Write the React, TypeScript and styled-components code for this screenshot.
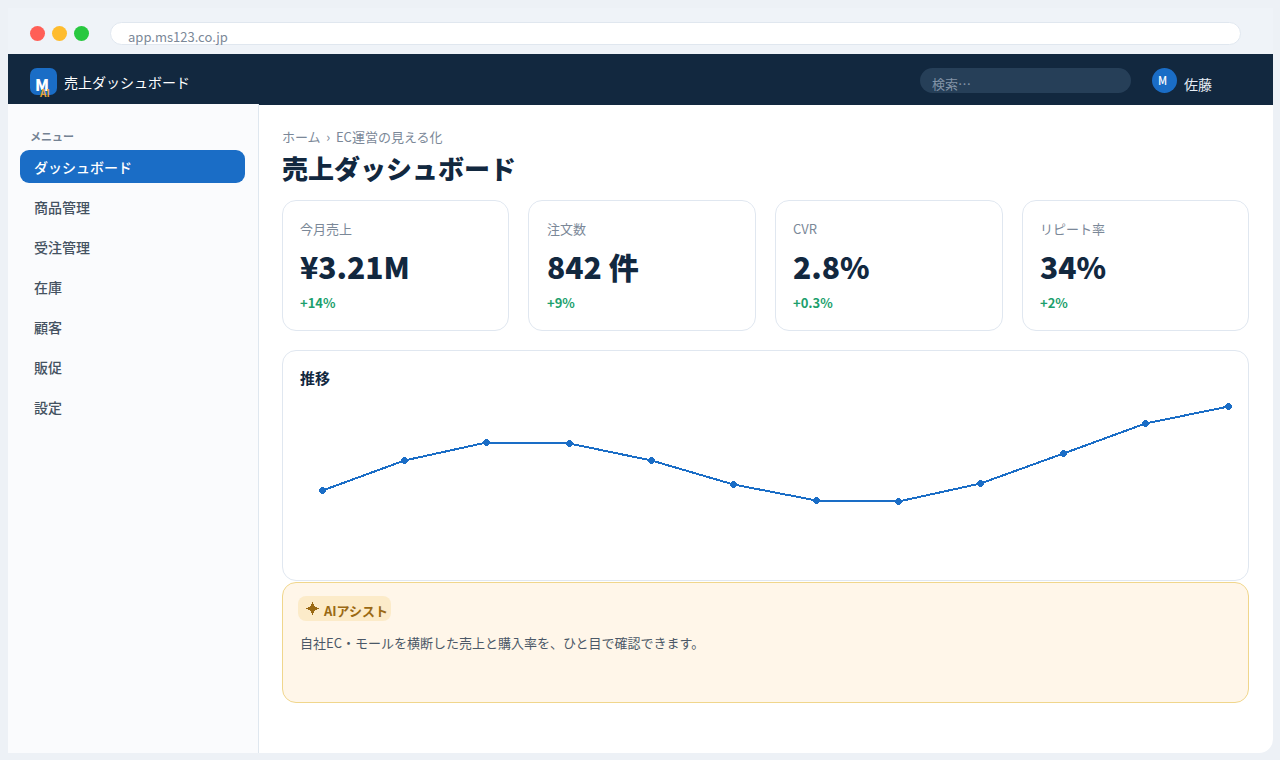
import React from "react";
import styled, { createGlobalStyle } from "styled-components";

const GlobalStyle = createGlobalStyle`
  * { box-sizing: border-box; }
  body {
    margin: 0;
    background: #edf1f6;
    font-family: "Noto Sans CJK JP", "Noto Sans", sans-serif;
    color: #12283f;
  }
`;

const Page = styled.div`
  width: 1280px;
  height: 760px;
  padding: 8px 7px 7px 8px;
  overflow: hidden;
`;

const Window = styled.div`
  height: 745px;
  display: flex;
  flex-direction: column;
  background: #fff;
  border-radius: 0 0 14px 0;
  overflow: hidden;
`;

const Chrome = styled.div`
  height: 46px;
  flex: none;
  display: flex;
  align-items: flex-start;
  padding: 14px 32px 0 22px;
  background: #eff3f8;
`;

const Lights = styled.div`
  display: flex;
  gap: 7px;
  width: 80px;
  padding-top: 4px;
`;

const Light = styled.span<{ $color: string }>`
  width: 15px;
  height: 15px;
  border-radius: 50%;
  background: ${(p) => p.$color};
`;

const Address = styled.div`
  flex: 1;
  height: 23px;
  padding: 4px 0 0 17px;
  border: 1px solid #e0e7ef;
  border-radius: 12px;
  background: #fff;
  color: #7b8898;
  font-size: 13px;
  line-height: 19px;
`;

const Header = styled.header`
  height: 51px;
  flex: none;
  display: flex;
  align-items: flex-start;
  padding: 14px 61px 0 22px;
  background: #12283f;
`;

const Logo = styled.div`
  position: relative;
  width: 27px;
  height: 27px;
  padding: 4px 0 0 5px;
  border-radius: 7px;
  background: #1a6dc6;
  color: #fff;
  font-size: 16px;
  font-weight: 900;
  line-height: 24px;
`;

const LogoTag = styled.span`
  position: absolute;
  left: 10px;
  top: 19px;
  color: #e8a435;
  font-size: 10px;
  font-weight: 700;
  line-height: 12px;
`;

const Brand = styled.div`
  margin: 4px auto 0 7px;
  color: #fff;
  font-size: 14px;
  line-height: 20px;
`;

const Search = styled.div`
  width: 211px;
  height: 25px;
  padding: 6px 0 0 12px;
  border-radius: 13px;
  background: #263f58;
  color: #8394a7;
  font-size: 13px;
  line-height: 20px;
`;

const Avatar = styled.div`
  width: 25px;
  height: 25px;
  margin-left: 21px;
  padding: 2px 0 0 6px;
  border-radius: 50%;
  background: #1a6dc6;
  color: #fff;
  font-size: 11px;
  font-weight: 500;
  line-height: 20px;
`;

const UserName = styled.div`
  width: 28px;
  margin: 6px 0 0 7px;
  color: #e6edf5;
  font-size: 14px;
  line-height: 20px;
`;

const Body = styled.div`
  flex: 1;
  display: flex;
  min-height: 0;
`;

const Sidebar = styled.nav`
  width: 251px;
  margin-top: -1px;
  padding: 22px 13px 0 12px;
  border-right: 1px solid #dfe7ef;
  background: #fafbfd;
`;

const MenuLabel = styled.div`
  height: 24px;
  padding-left: 10px;
  color: #748293;
  font-size: 11px;
  font-weight: 700;
  line-height: 20px;
`;

const MenuItem = styled.div<{ $active?: boolean }>`
  height: 33px;
  margin-bottom: 7px;
  padding: 7px 0 0 14px;
  border-radius: 9px;
  background: ${(p) => (p.$active ? "#1a6dc6" : "transparent")};
  color: ${(p) => (p.$active ? "#fff" : "#445261")};
  font-size: 14px;
  font-weight: 500;
  line-height: 20px;
`;

const Main = styled.main`
  flex: 1;
  padding: 22px 24px 0 23px;
`;

const Breadcrumb = styled.div`
  height: 20px;
  color: #7b8898;
  font-size: 13px;
  line-height: 20px;
  word-spacing: 2.8px;
`;

const Title = styled.h1`
  height: 53px;
  margin: 0;
  padding-top: 2px;
  font-size: 26px;
  font-weight: 900;
  line-height: 38px;
`;

const Metrics = styled.section`
  display: grid;
  grid-template-columns: 227px 228px 228px 227px;
  column-gap: 19px;
  margin-bottom: 19px;
`;

const Panel = styled.section`
  border: 1px solid #e0e7f0;
  border-radius: 14px;
  background: #fff;
`;

const Metric = styled(Panel)`
  height: 131px;
  padding: 18px 17px 0;

  &:nth-child(2) {
    padding-left: 18px;
  }
`;

const MetricLabel = styled.div`
  color: #7b8898;
  font-size: 13px;
  line-height: 20px;
`;

const MetricValue = styled.div`
  height: 54px;
  padding-top: 4px;
  font-size: 30px;
  font-weight: 900;
  line-height: 46px;
`;

const MetricDelta = styled.div`
  color: #1d9f6d;
  font-size: 13px;
  font-weight: 700;
  line-height: 20px;
`;

const ChartPanel = styled(Panel)`
  height: 231px;
  margin-bottom: 1px;
  padding-top: 16px;
`;

const ChartTitle = styled.h2`
  height: 24px;
  margin: 0;
  padding-left: 17px;
  font-size: 15px;
  font-weight: 700;
  line-height: 22px;
`;

const ChartSvg = styled.svg`
  display: block;
`;

const Assist = styled(Panel)`
  height: 121px;
  padding: 13px 15px 0;
  border-color: #f0d68c;
  background: #fff6e9;
`;

const AssistBadge = styled.div`
  display: flex;
  width: 93px;
  height: 25px;
  padding: 5px 0 0 8px;
  border-radius: 8px;
  background: #fcebc9;
  color: #9a6913;
  font-size: 13px;
  font-weight: 700;
  line-height: 20px;
  white-space: nowrap;
`;

const Spark = styled.svg`
  flex: none;
  margin: 1px 5px 0 0;
`;

const AssistText = styled.p`
  margin: 12px 0 0 2px;
  color: #4b5867;
  font-size: 13px;
  line-height: 20px;
`;

const menu = ["ダッシュボード", "商品管理", "受注管理", "在庫", "顧客", "販促", "設定"];

const metrics = [
  { label: "今月売上", value: "¥3.21M", delta: "+14%" },
  { label: "注文数", value: "842 件", delta: "+9%" },
  { label: "CVR", value: "2.8%", delta: "+0.3%" },
  { label: "リピート率", value: "34%", delta: "+2%" },
];

const points: [number, number][] = [
  [39, 99], [121, 69], [203, 51], [286, 52], [368, 69], [450, 93],
  [533, 109], [615, 110], [697, 92], [780, 62], [862, 32], [945, 15],
];

function TrendChart() {
  return (
    <ChartSvg width="965" height="180" viewBox="0 0 965 180" shapeRendering="crispEdges">
      <polyline
        points={points.map(([x, y]) => `${x + 0.5},${y + 0.5}`).join(" ")}
        fill="none"
        stroke="#1a6dc6"
        strokeWidth="2"
      />
      {points.map(([x, y]) => (
        <circle key={x} cx={x + 0.5} cy={y + 0.5} r="3.4" fill="#1a6dc6" />
      ))}
    </ChartSvg>
  );
}

export default function App() {
  return (
    <Page>
      <GlobalStyle />
      <Window>
        <Chrome>
          <Lights>
            <Light $color="#ff5f57" />
            <Light $color="#febc2e" />
            <Light $color="#28c840" />
          </Lights>
          <Address>app.ms123.co.jp</Address>
        </Chrome>
        <Header>
          <Logo>
            M<LogoTag>AI</LogoTag>
          </Logo>
          <Brand>売上ダッシュボード</Brand>
          <Search>検索…</Search>
          <Avatar>M</Avatar>
          <UserName>佐藤</UserName>
        </Header>
        <Body>
          <Sidebar>
            <MenuLabel>メニュー</MenuLabel>
            {menu.map((name, i) => (
              <MenuItem key={name} $active={i === 0}>
                {name}
              </MenuItem>
            ))}
          </Sidebar>
          <Main>
            <Breadcrumb>ホーム › EC運営の見える化</Breadcrumb>
            <Title>売上ダッシュボード</Title>
            <Metrics>
              {metrics.map((m) => (
                <Metric key={m.label}>
                  <MetricLabel>{m.label}</MetricLabel>
                  <MetricValue>{m.value}</MetricValue>
                  <MetricDelta>{m.delta}</MetricDelta>
                </Metric>
              ))}
            </Metrics>
            <ChartPanel>
              <ChartTitle>推移</ChartTitle>
              <TrendChart />
            </ChartPanel>
            <Assist>
              <AssistBadge>
                <Spark width="13" height="13" viewBox="0 0 13 13" shapeRendering="crispEdges">
                  <path d="M6 0 H7 V2 H8 V4 H9 V5 H11 V6 H13 V7 H11 V8 H9 V9 H8 V11 H7 V13 H6 V11 H5 V9 H4 V8 H2 V7 H0 V6 H2 V5 H4 V4 H5 V2 H6 Z" fill="#9a6913" />
                </Spark>
                AIアシスト
              </AssistBadge>
              <AssistText>自社EC・モールを横断した売上と購入率を、ひと目で確認できます。</AssistText>
            </Assist>
          </Main>
        </Body>
      </Window>
    </Page>
  );
}
